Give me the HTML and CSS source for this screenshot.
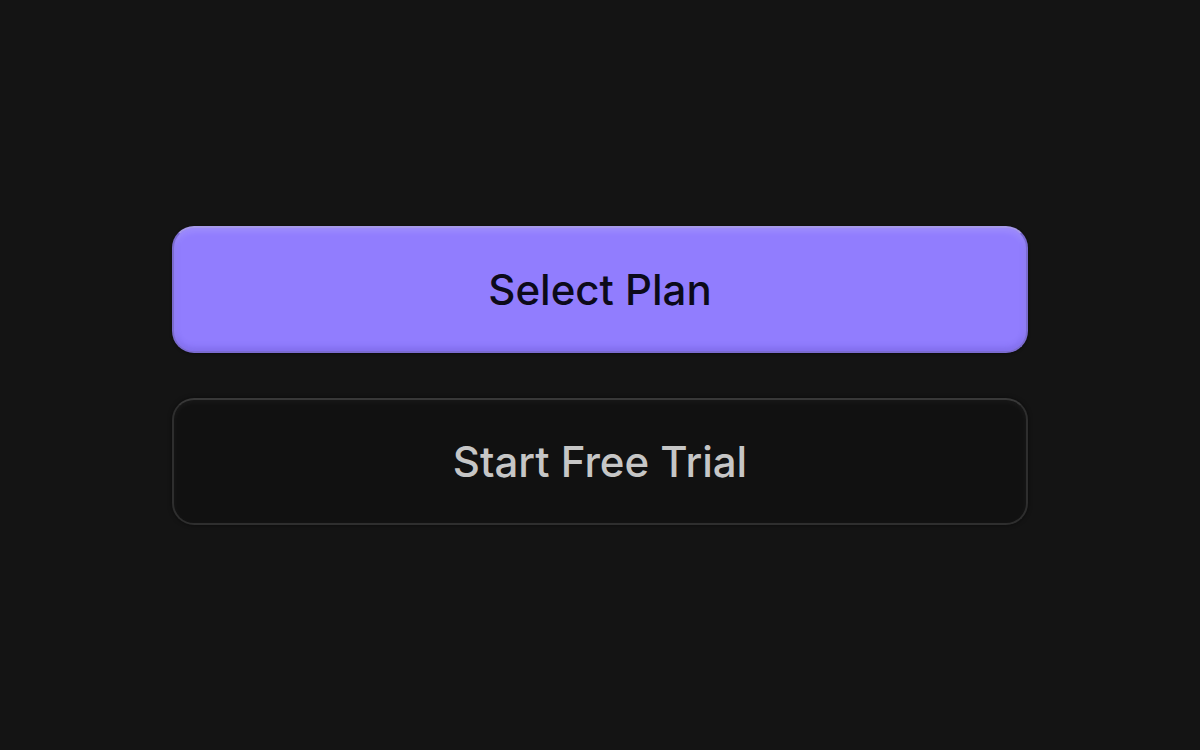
FILE: index.html
```html
<!DOCTYPE html>
<html>
<head>
<meta charset="utf-8">
<link rel="stylesheet" href="styles.css">
</head>
<body>
<main class="stage">
  <div class="actions">
    <button class="btn btn-primary">Select Plan</button>
    <button class="btn btn-secondary">Start Free Trial</button>
  </div>
</main>
</body>
</html>
```
FILE: styles.css
```css
html, body {
  margin: 0;
  padding: 0;
  background: #141414;
  height: 100%;
}
.stage {
  height: 100vh;
  display: flex;
  align-items: center;
  justify-content: center;
}
.actions {
  width: 856px;
  display: flex;
  flex-direction: column;
  gap: 45px;
}
.btn {
  height: 127px;
  border-radius: 22px;
  font-family: Inter, "Noto Sans", sans-serif;
  font-weight: 500;
  font-size: 42px;
  letter-spacing: 0;
  display: flex;
  align-items: center;
  justify-content: center;
  padding: 0;
  box-sizing: border-box;
  cursor: pointer;
}
.btn-primary {
  background: #917dfe;
  color: #0c0a1a;
  border: 2px solid #7b6bd0;
  border-top-color: #a699ea;
  box-shadow: inset 0 3px 6px rgba(255,255,255,0.16), inset 0 -3px 6px rgba(60,40,160,0.22), 0 1px 3px rgba(0,0,0,0.4);
}
.btn-secondary {
  background: #111111;
  color: #c6c6c6;
  border: 2px solid #2e2e2e;
  border-top-color: #383838;
  box-shadow: inset 0 2px 6px rgba(255,255,255,0.04), 0 0 4px rgba(0,0,0,0.5);
}
```
